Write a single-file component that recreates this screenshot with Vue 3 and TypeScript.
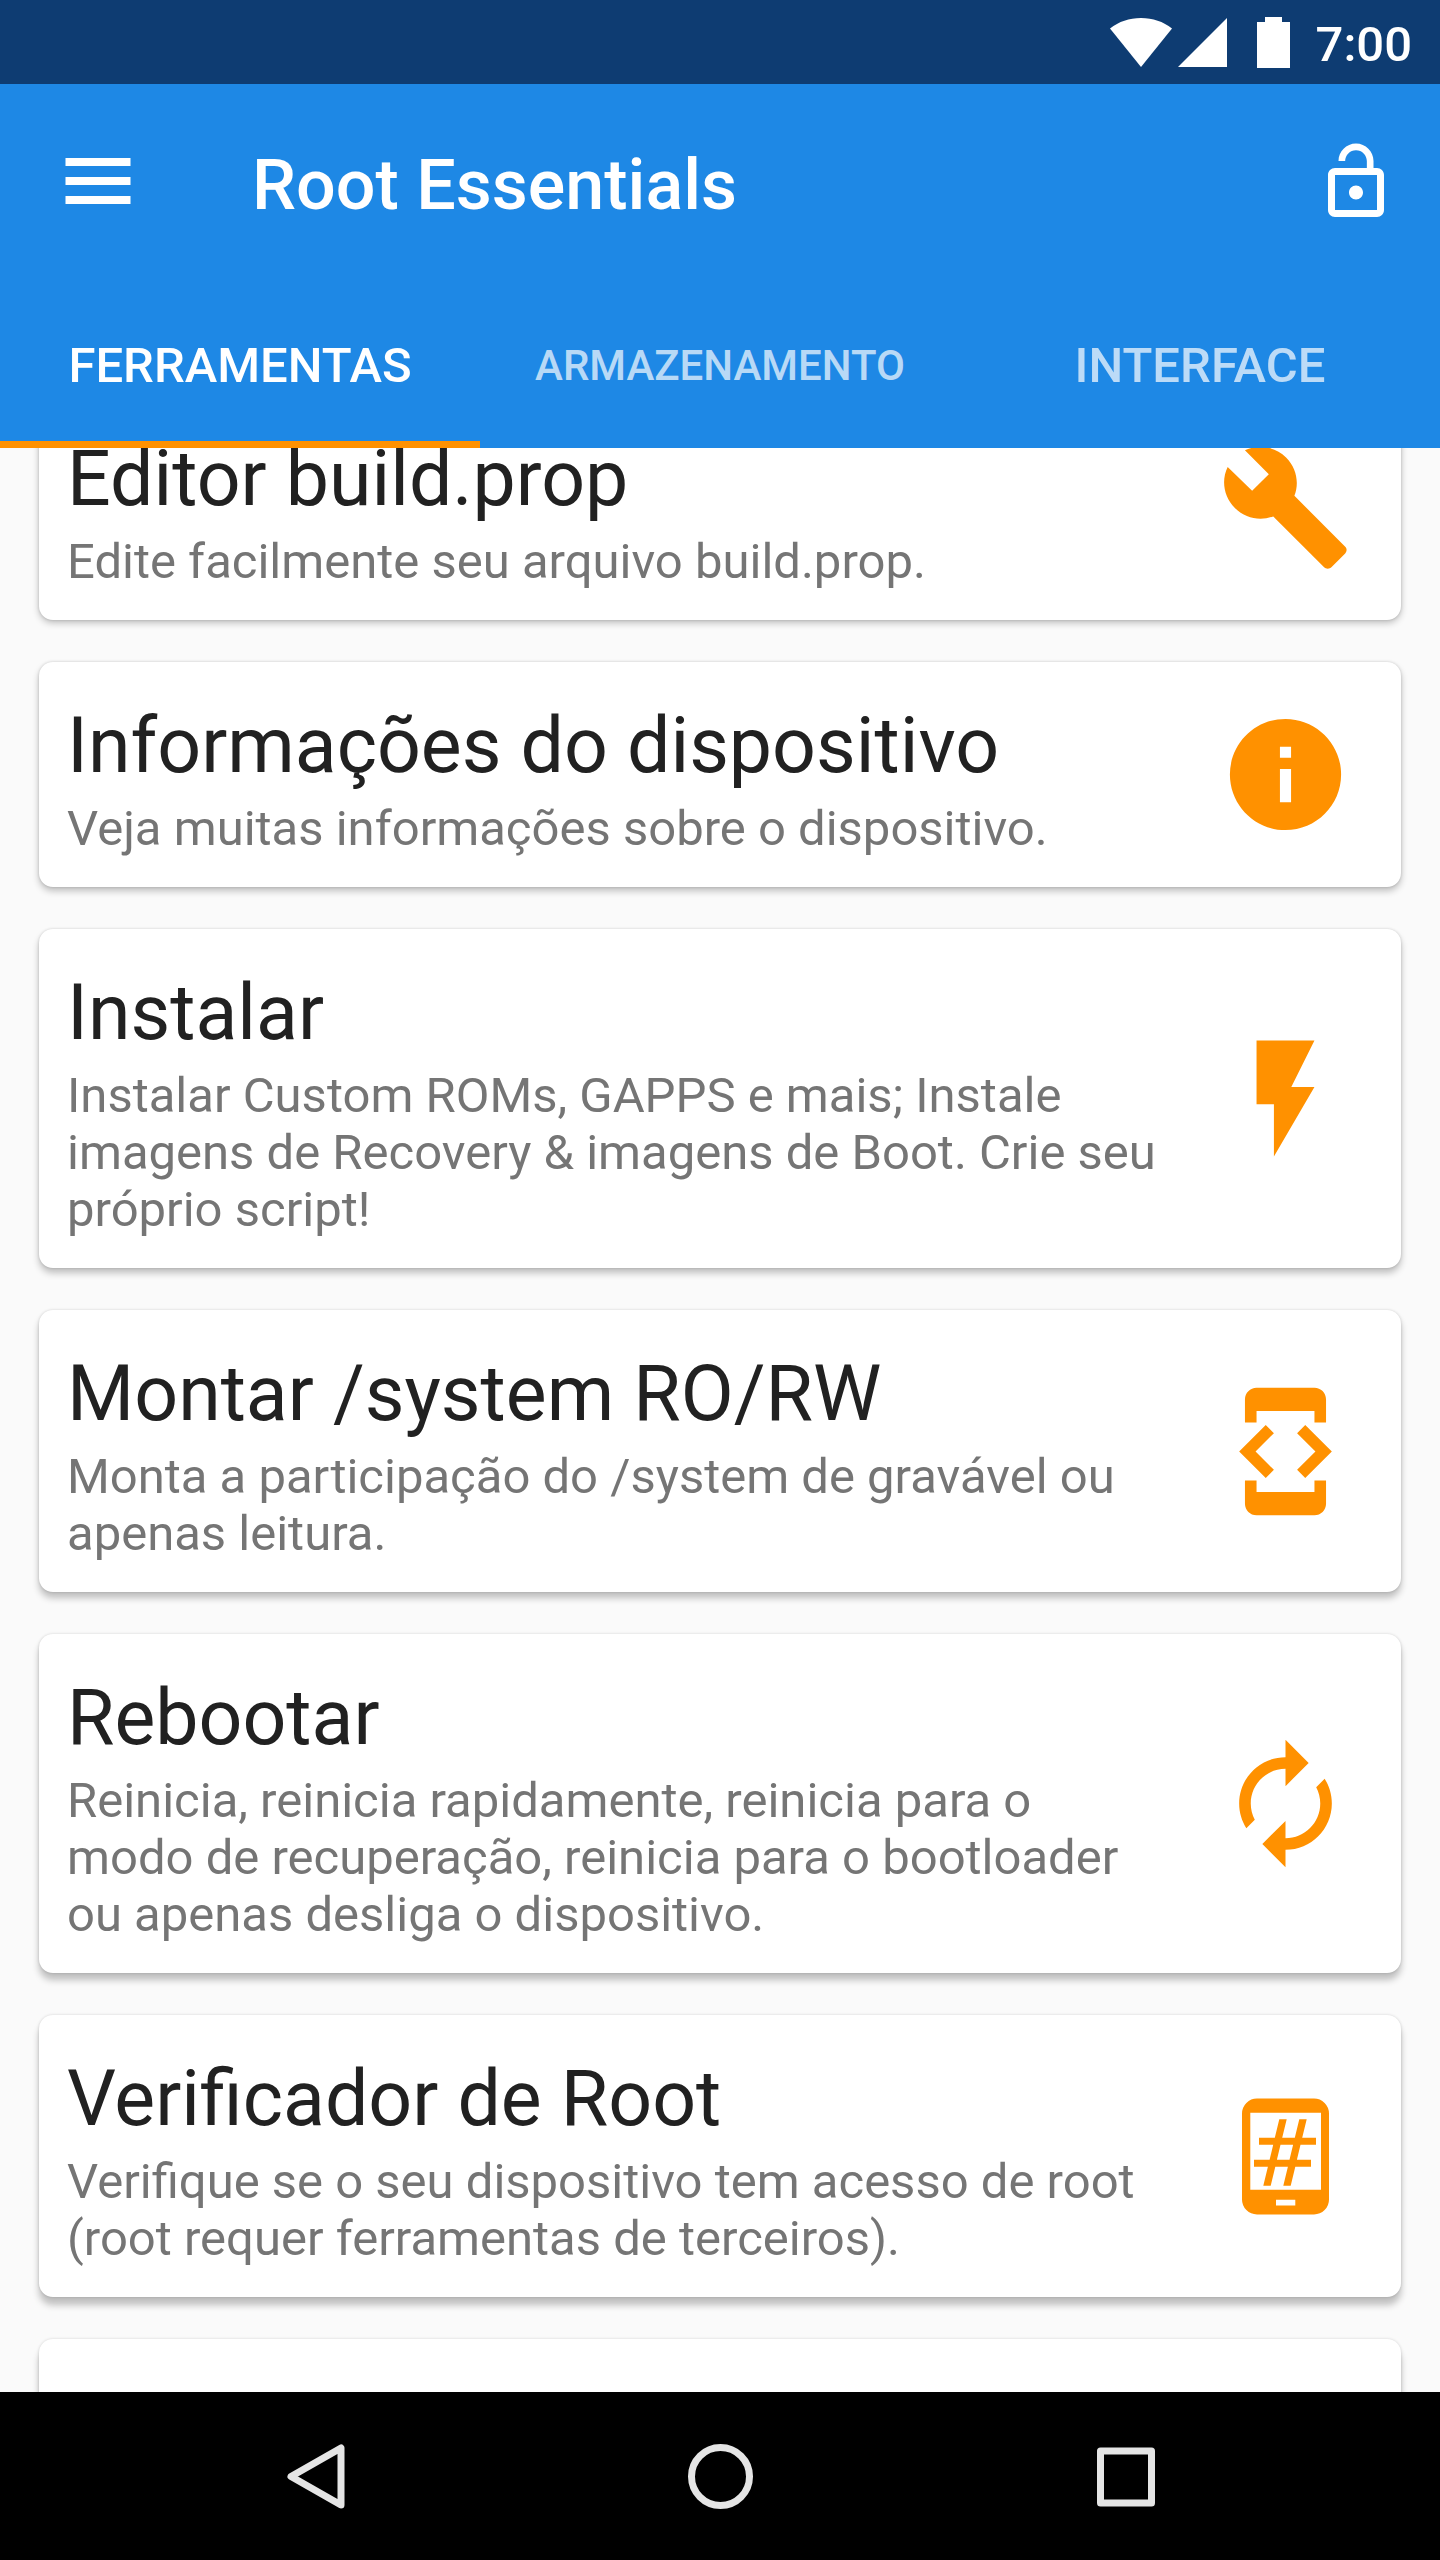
<script setup lang="ts">
import { onMounted, ref } from 'vue'

interface Tab {
  label: string
  long?: boolean
}

interface Tool {
  title: string
  text: string
  viewBox: string
  path: string
}

const tabs: Tab[] = [
  { label: 'FERRAMENTAS' },
  { label: 'ARMAZENAMENTO', long: true },
  { label: 'INTERFACE' },
]
const activeTab = ref(0)

const tools: Tool[] = [
  {
    title: 'Editor build.prop',
    text: 'Edite facilmente seu arquivo build.prop.',
    viewBox: '-0.5 -0.5 25 25',
    path: 'M22.7 19l-9.1-9.1c.9-2.3.4-5-1.5-6.9-2-2-5-2.4-7.4-1.3L9 6 6 9 1.6 4.7C.4 7.1.9 10.1 2.9 12.1c1.9 1.9 4.6 2.4 6.9 1.5l9.1 9.1c.4.4 1 .4 1.4 0l2.3-2.3c.5-.4.5-1.1.1-1.4z',
  },
  {
    title: 'Informações do dispositivo',
    text: 'Veja muitas informações sobre o dispositivo.',
    viewBox: '-0.5 -0.5 25 25',
    path: 'M12 2C6.48 2 2 6.48 2 12s4.48 10 10 10 10-4.48 10-10S17.52 2 12 2zm1 15h-2v-6h2v6zm0-8h-2V7h2v2z',
  },
  {
    title: 'Instalar',
    text: 'Instalar Custom ROMs, GAPPS e mais; Instale imagens de Recovery & imagens de Boot. Crie seu próprio script!',
    viewBox: '0 0 24 24',
    path: 'M7 2v11h3v9l7-12h-4l4-8z',
  },
  {
    title: 'Montar /system RO/RW',
    text: 'Monta a participação do /system de gravável ou apenas leitura.',
    viewBox: '0 0 24 24',
    path: 'M7 5h10v2h2V3c0-1.1-.9-1.99-2-1.99L7 1c-1.1 0-2 .9-2 2v4h2V5zm8.41 11.59L20 12l-4.59-4.59L14 8.83 17.17 12 14 15.17l1.41 1.42zM10 15.17L6.83 12 10 8.83 8.59 7.41 4 12l4.59 4.59L10 15.17zM17 19H7v-2H5v4c0 1.1.9 2 2 2h10c1.1 0 2-.9 2-2v-4h-2v2z',
  },
  {
    title: 'Rebootar',
    text: 'Reinicia, reinicia rapidamente, reinicia para o modo de recuperação, reinicia para o bootloader ou apenas desliga o dispositivo.',
    viewBox: '0 0 24 24',
    path: 'M12 6v3l4-4-4-4v3c-4.42 0-8 3.58-8 8 0 1.57.46 3.03 1.24 4.26L6.7 14.8c-.45-.83-.7-1.79-.7-2.8 0-3.31 2.69-6 6-6zm6.76 1.74L17.3 9.2c.44.84.7 1.79.7 2.8 0 3.31-2.69 6-6 6v-3l-4 4 4 4v-3c4.42 0 8-3.58 8-8 0-1.57-.46-3.03-1.24-4.26z',
  },
  {
    title: 'Verificador de Root',
    text: 'Verifique se o seu dispositivo tem acesso de root (root requer ferramentas de terceiros).',
    viewBox: '0 0 139 139',
    path: 'M41 11.5h57a15 15 0 0 1 15 15v86a15 15 0 0 1-15 15H41a15 15 0 0 1-15-15v-86a15 15 0 0 1 15-15zM34.3 25.8v77H105v-77zM60 112.8v5.7h19.3v-5.7zM63.3 32.2h7.4l-4.5 18.6h12.6l4.5-18.6h7.4l-4.5 18.6H100v7H84.5l-3.6 15H95v7H79.3l-4.6 19h-7.4l4.6-19H59.3l-4.6 19h-7.4l4.6-19H38v-7h15.6l3.6-15H43v-7h15.8zM64.5 57.8l-3.6 15h12.6l3.6-15z',
  },
  {
    title: 'Remover apps adicionais',
    text: '',
    viewBox: '0 0 24 24',
    path: '',
  },
]

// The list opens slightly scrolled, with the first card half under the tabs.
const list = ref<HTMLElement | null>(null)
onMounted(() => {
  if (list.value) list.value.scrollTop = 95
})
</script>

<template>
  <div class="screen">
    <header>
      <div class="status">
        <svg class="wifi" width="62" height="50" viewBox="0 0 62 50" aria-hidden="true">
          <path d="M31 50L0 11.5C9 4.5 19 1 31 1s22 3.5 31 10.5z" fill="#fff" />
        </svg>
        <svg class="signal" width="49" height="50" viewBox="0 0 49 50" aria-hidden="true">
          <path d="M0 50L49 1v49z" fill="#fff" />
        </svg>
        <svg class="battery" width="33" height="51" viewBox="0 0 33 51" aria-hidden="true">
          <path d="M8 0h17v5h8v46H0V5h8z" fill="#fff" />
        </svg>
        <span class="clock">7:00</span>
      </div>
      <div class="appbar">
        <button class="icon-button" type="button" aria-label="Menu">
          <svg width="84" height="84" viewBox="0 0 84 84">
            <path d="M9.5 18h65v8h-65zM9.5 37h65v8h-65zM9.5 56h65v8h-65z" fill="#fff" />
          </svg>
        </button>
        <h1>Root Essentials</h1>
        <button class="icon-button" type="button" aria-label="Desbloquear">
          <svg width="84" height="84" viewBox="0 0 24 24">
            <path
              fill="#fff"
              d="M12 17c1.1 0 2-.9 2-2s-.9-2-2-2-2 .9-2 2 .9 2 2 2zm6-9h-1V6c0-2.76-2.24-5-5-5S7 3.24 7 6h1.9c0-1.71 1.39-3.1 3.1-3.1 1.71 0 3.1 1.39 3.1 3.1v2H6c-1.1 0-2 .9-2 2v10c0 1.1.9 2 2 2h12c1.1 0 2-.9 2-2V10c0-1.1-.9-2-2-2zm0 12H6V10h12v10z"
            />
          </svg>
        </button>
      </div>
      <div class="tabs" role="tablist">
        <button
          v-for="(tab, i) in tabs"
          :key="tab.label"
          class="tab"
          :class="{ active: i === activeTab, long: tab.long }"
          type="button"
          role="tab"
          :aria-selected="i === activeTab"
          @click="activeTab = i"
        >
          {{ tab.label }}
        </button>
      </div>
    </header>

    <main ref="list">
      <button
        v-for="(tool, i) in tools"
        :key="tool.title"
        class="card"
        type="button"
        :style="{ '--drop': `${i + 3}px` }"
      >
        <span class="body">
          <span class="title">{{ tool.title }}</span>
          <span class="text">{{ tool.text }}</span>
        </span>
        <svg class="glyph" width="139" height="139" :viewBox="tool.viewBox" aria-hidden="true">
          <path :d="tool.path" fill="#ff9100" fill-rule="evenodd" />
        </svg>
      </button>
    </main>

    <nav>
      <button type="button" aria-label="Voltar">
        <svg width="66" height="66" viewBox="0 0 66 66">
          <path d="M59 5v57L9 33.5z" />
        </svg>
      </button>
      <button type="button" aria-label="Início">
        <svg width="66" height="66" viewBox="0 0 66 66">
          <circle cx="33.5" cy="33.5" r="29" />
        </svg>
      </button>
      <button type="button" aria-label="Recentes">
        <svg width="66" height="66" viewBox="0 0 66 66">
          <rect x="8.5" y="8" width="51" height="52" />
        </svg>
      </button>
    </nav>
  </div>
</template>

<style>
body {
  margin: 0;
  background: #fafafa;
}
</style>

<style scoped>
.screen {
  display: flex;
  flex-direction: column;
  height: 100vh;
  font-family: Roboto, "Liberation Sans", sans-serif;
  background: #fafafa;
}

button {
  margin: 0;
  padding: 0;
  border: 0;
  background: none;
  color: inherit;
  font: inherit;
  cursor: pointer;
}

svg {
  display: block;
  flex: none;
}

header {
  flex: none;
  background: #1e88e5;
  color: #fff;
}

.status {
  display: flex;
  align-items: center;
  justify-content: flex-end;
  box-sizing: border-box;
  height: 84px;
  padding-right: 28px;
  background: #0e3c72;
}

.signal {
  margin-left: 6px;
}

.battery {
  margin-left: 30px;
}

.clock {
  margin-left: 26px;
  padding-top: 4px;
  font-size: 49px;
  font-weight: 500;
  line-height: 57px;
}

.appbar {
  display: flex;
  align-items: center;
  height: 196px;
  padding: 0 42px 0 56px;
}

h1 {
  flex: 1;
  margin: 0 0 0 112px;
  padding-top: 6px;
  font-size: 70px;
  font-weight: 500;
  line-height: 82px;
}

.tabs {
  display: grid;
  grid-template-columns: repeat(3, 1fr);
  height: 168px;
}

.tab {
  padding-top: 2px;
  color: rgba(255, 255, 255, 0.7);
  font-size: 49px;
  font-weight: 500;
  line-height: 57px;
}

.tab.long {
  font-size: 42px;
}

.tab.active {
  color: #fff;
  box-shadow: inset 0 -7px #ff9100;
}

main {
  display: flex;
  flex: 1;
  flex-direction: column;
  gap: 42px;
  min-height: 0;
  padding: 42px 39px;
  overflow-y: auto;
  scrollbar-width: none;
}

.card {
  display: flex;
  flex: none;
  align-items: center;
  gap: 56px;
  min-height: 225px;
  padding: 39px 46px 30px 28px;
  border-radius: 14px;
  background: #fff;
  box-shadow: 0 var(--drop) 7px rgba(0, 0, 0, 0.24), 0 0 3px rgba(0, 0, 0, 0.16);
  text-align: left;
}

.body {
  display: flex;
  flex: 1;
  flex-direction: column;
  gap: 9px;
}

.title {
  color: #212121;
  font-size: 77px;
  line-height: 90px;
}

.text {
  color: #757575;
  font-size: 49px;
  line-height: 57px;
}

/* The glyph centres on the whole card, not on its padded content. */
.glyph {
  margin: -39px 0 -30px;
}

nav {
  display: grid;
  flex: none;
  grid-template-columns: repeat(3, 1fr);
  height: 168px;
  padding: 0 112px;
  background: #000;
}

nav button {
  display: grid;
  place-items: center;
}

nav svg {
  fill: none;
  stroke: #e5e5e5;
  stroke-width: 7;
  stroke-linejoin: round;
}
</style>
